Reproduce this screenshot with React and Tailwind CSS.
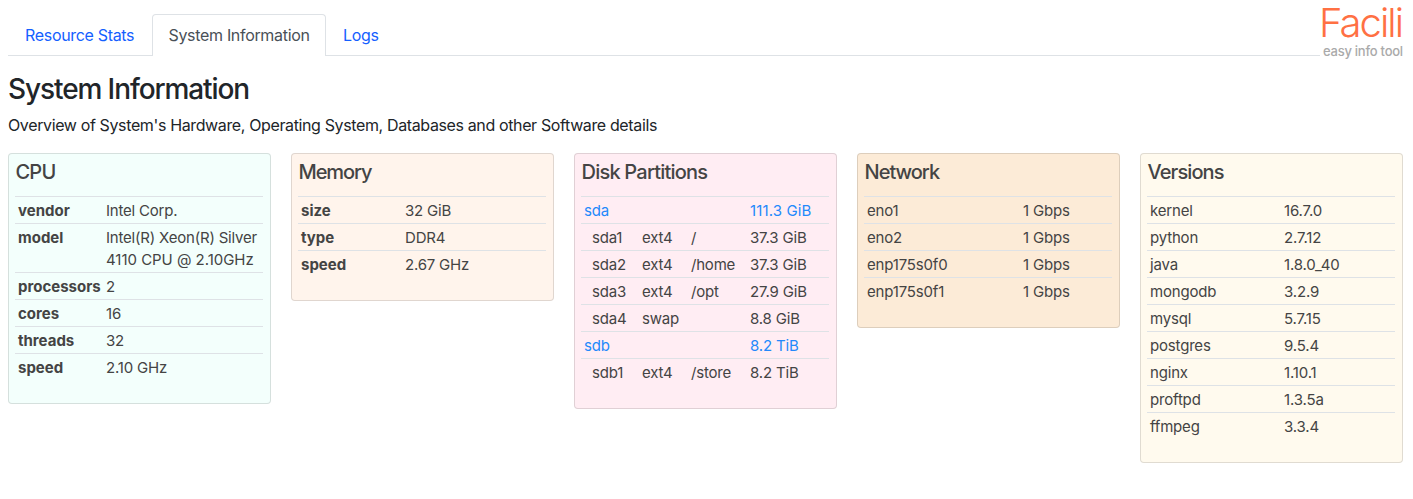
const cellBase = 'h-full border-t border-[#dee2e6] px-[3px] pt-[3px] pb-px leading-[22px]';

function Card({ title, className, titleClass, columns, rows, renderRow }) {
  return (
    <section className={`w-[263px] shrink-0 rounded-[4px] border border-black/12 pr-[7px] pl-[6px] pb-[23px] text-[#444] ${className}`}>
      <h4 className={`flex h-[42px] items-start pt-[6px] pl-[0.5px] text-[20px] leading-6 font-medium ${titleClass}`}>{title}</h4>
      <div className={`grid text-[15px] ${columns}`}>{rows.map(renderRow)}</div>
    </section>
  );
}

const labelled = ([name, value]) => (
  <div key={name} className="contents">
    <div className={`${cellBase} font-bold whitespace-nowrap`}>{name}</div>
    <div className={`${cellBase} tracking-[-0.2px]`}>{value}</div>
  </div>
);

const plain = ([name, value]) => (
  <div key={name} className="contents">
    <div className={`${cellBase} tracking-[-0.18px]`}>{name}</div>
    <div className={`${cellBase} tracking-[-0.16px]`}>{value}</div>
  </div>
);

const disk = ([name, type, mount, size]) => {
  const tone = type ? '' : 'text-[#2389fb]';
  return (
    <div key={name} className="contents">
      <div className={`${cellBase} tracking-[-0.2px] ${type ? 'pl-[11px]' : tone}`}>{name}</div>
      <div className={`${cellBase} tracking-[-0.2px]`}>{type}</div>
      <div className={`${cellBase} tracking-[-0.2px]`}>{mount}</div>
      <div className={`${cellBase} ${name === 'sda' ? 'tracking-[0.12px]' : 'tracking-[-0.16px]'} ${tone}`}>{size}</div>
    </div>
  );
};

const cpu = [
  ['vendor', 'Intel Corp.'],
  ['model', <>Intel(R) Xeon(R) Silver<br /><span className="tracking-[-0.03px]">4110 CPU @ 2.10GHz</span></>],
  ['processors', '2'],
  ['cores', '16'],
  ['threads', '32'],
  ['speed', '2.10 GHz'],
];
const memory = [['size', '32 GiB'], ['type', 'DDR4'], ['speed', '2.67 GHz']];
const disks = [
  ['sda', '', '', '111.3 GiB'],
  ['sda1', 'ext4', '/', '37.3 GiB'],
  ['sda2', 'ext4', '/home', '37.3 GiB'],
  ['sda3', 'ext4', '/opt', '27.9 GiB'],
  ['sda4', 'swap', '', '8.8 GiB'],
  ['sdb', '', '', '8.2 TiB'],
  ['sdb1', 'ext4', '/store', '8.2 TiB'],
];
const network = [['eno1', '1 Gbps'], ['eno2', '1 Gbps'], ['enp175s0f0', '1 Gbps'], ['enp175s0f1', '1 Gbps']];
const versions = [
  ['kernel', '16.7.0'],
  ['python', '2.7.12'],
  ['java', '1.8.0_40'],
  ['mongodb', '3.2.9'],
  ['mysql', '5.7.15'],
  ['postgres', '9.5.4'],
  ['nginx', '1.10.1'],
  ['proftpd', '1.3.5a'],
  ['ffmpeg', '3.3.4'],
];

export default function App() {
  return (
    <div className="h-[499px] overflow-hidden bg-white px-2 font-['Inter',sans-serif] text-[#212529]">
      <header className="flex h-[62px]">
        <nav className="flex h-[56px] flex-1 items-end text-[16px] leading-6 tracking-[-0.32px] whitespace-nowrap text-[#1460ff]">
          <a className="h-[42px] w-[144px] border-b border-[#dee2e6] pt-[9px] pl-[17px]">Resource Stats</a>
          <a className="h-[42px] w-[174px] rounded-t-[4px] border border-b-0 border-[#dee2e6] pt-[8px] pl-[15.5px] text-[#495057]">System Information</a>
          <a className="h-[42px] flex-1 border-b border-[#dee2e6] pt-[9px] pl-[17px]">Logs</a>
        </nav>
        <div className="flex w-[85px] flex-col items-start pl-[3px] whitespace-nowrap">
          <div className="-ml-[4px] pt-[3px] h-[43px] text-[40px] leading-[40px] font-light tracking-[-2px] text-[#ff7043]">Facili</div>
          <div className="text-[13px] leading-4 font-medium tracking-[-0.25px] text-[#aaa]">easy info tool</div>
        </div>
      </header>
      <h1 className="mt-[10px] h-[34px] text-[28px] leading-[34px] font-medium tracking-[-1.1px]">System Information</h1>
      <p className="mt-[7px] h-[40px] text-[16px] leading-6 tracking-[-0.37px]">Overview of System&apos;s Hardware, Operating System, Databases and other Software details</p>
      <main className="flex items-start gap-5">
        <Card title="CPU" className="bg-[#f3fffc]" titleClass="tracking-[-0.8px]" columns="grid-cols-[88px_160px]" rows={cpu} renderRow={labelled} />
        <Card title="Memory" className="bg-[#fff4ec]" titleClass="tracking-[-1.1px]" columns="grid-cols-[104px_144px]" rows={memory} renderRow={labelled} />
        <Card title="Disk Partitions" className="bg-[#ffedf3]" titleClass="tracking-[-0.78px]" columns="grid-cols-[58px_49px_59px_82px]" rows={disks} renderRow={disk} />
        <Card title="Network" className="bg-[#fcebd7]" titleClass="tracking-[-1px]" columns="grid-cols-[156px_92px]" rows={network} renderRow={plain} />
        <Card title="Versions" className="bg-[#fffaee]" titleClass="tracking-[-0.9px]" columns="grid-cols-[134px_114px]" rows={versions} renderRow={plain} />
      </main>
    </div>
  );
}
